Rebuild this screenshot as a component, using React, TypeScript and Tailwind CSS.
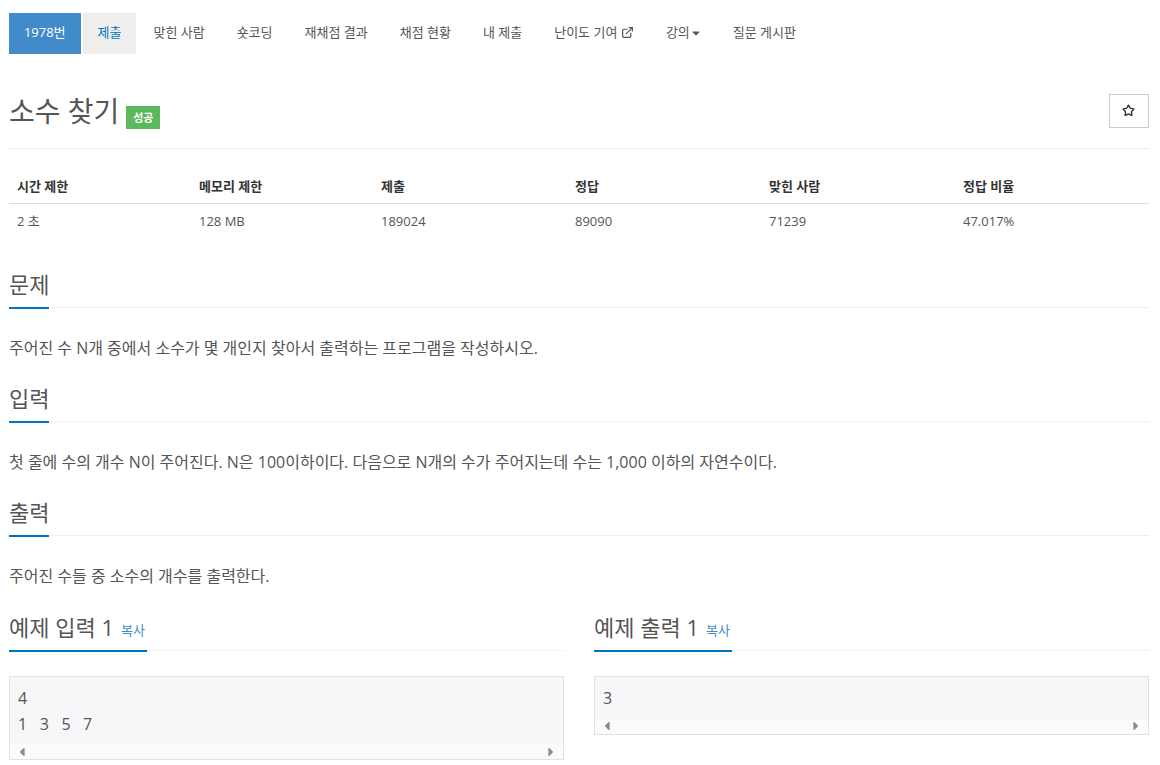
import React from 'react';
import { FaCaretDown, FaCaretLeft, FaCaretRight } from 'react-icons/fa';
import { ExternalLink, Star } from 'lucide-react';

const navItems = ['맞힌 사람', '숏코딩', '재채점 결과', '채점 현황', '내 제출'];

const stats = [
  { label: '시간 제한', value: '2 초', width: 'w-[182px]' },
  { label: '메모리 제한', value: '128 MB', width: 'w-[182px]' },
  { label: '제출', value: '189024', width: 'w-[194px]' },
  { label: '정답', value: '89090', width: 'w-[194px]' },
  { label: '맞힌 사람', value: '71239', width: 'w-[194px]' },
  { label: '정답 비율', value: '47.017%', width: 'w-[194px]' },
];

const sections = [
  { title: '문제', body: '주어진 수 N개 중에서 소수가 몇 개인지 찾아서 출력하는 프로그램을 작성하시오.' },
  { title: '입력', body: '첫 줄에 수의 개수 N이 주어진다. N은 100이하이다. 다음으로 N개의 수가 주어지는데 수는 1,000 이하의 자연수이다.' },
  { title: '출력', body: '주어진 수들 중 소수의 개수를 출력한다.' },
];

const Heading: React.FC<{ children: React.ReactNode }> = ({ children }) => (
  <div className="h-[39px] flex items-end border-b border-dotted border-[#e4e4e4]">
    <div className="h-[39px] -mb-[2px] pb-[10px] border-b-2 border-[#0076c0] flex items-center text-[22px] leading-[30px] text-[#555]">
      {children}
    </div>
  </div>
);

const Sample: React.FC<{ title: string; lines: string[] }> = ({ title, lines }) => (
  <div className="w-[555px]">
    <Heading>
      <span>{title}</span>
      <a href="#" className="ml-[7px] mt-[6px] text-[13px] text-[#428bca] pr-[2px]">복사</a>
    </Heading>
    <div className="mt-[25px] border border-[#e1e1e8] bg-[#f7f7f9]">
      <pre className="px-2 pt-[9px] pb-[7px] text-[16px] leading-[25.5px] tracking-[4.2px] text-[#555] font-['Open_Sans','Noto_Sans_CJK_KR',sans-serif]">
        {lines.join('\n')}
      </pre>
      <div className="h-[15px] bg-[#fbfbfb] flex items-center justify-between px-[5px] text-[#8a8a8a] text-sm">
        <FaCaretLeft />
        <FaCaretRight />
      </div>
    </div>
  </div>
);

export default function App() {
  return (
    <div className="min-h-screen bg-white pl-[9px] pr-[11px] pt-[13px] text-sm text-[#555] font-['Open_Sans','Noto_Sans_CJK_KR',sans-serif]">
      {/* Problem menu */}
      <ul className="flex h-[41px] gap-[2px] text-[13px] whitespace-nowrap">
        <li className="w-[71.5px] pb-[2px] flex items-center justify-center bg-[#428bca] text-white">1978번</li>
        <li className="px-[15px] pb-[2px] flex items-center bg-[#eee] text-[#0076c0]">제출</li>
        {navItems.map((item) => (
          <li key={item} className="px-[15px] pb-[2px] flex items-center">{item}</li>
        ))}
        <li className="px-[15px] pb-[2px] flex items-center gap-[3.5px]">
          난이도 기여 <ExternalLink size={13} strokeWidth={2.25} />
        </li>
        <li className="pl-[15px] pr-[14px] pb-[2px] flex items-center">
          강의<FaCaretDown className="text-xs" />
        </li>
        <li className="px-[15px] pb-[2px] flex items-center">질문 게시판</li>
      </ul>

      {/* Title */}
      <div className="h-[95px] border-b border-[#eee] flex items-start justify-between">
        <div className="flex items-center mt-[38px]">
          <h1 className="text-[28px] leading-[38px]">소수 찾기</h1>
          <span className="ml-[7px] mt-[13px] w-[34px] h-[23px] bg-[#5cb85c] text-white text-[11px] font-bold flex items-center justify-center">성공</span>
        </div>
        <button className="mt-[40px] w-[40px] h-[34px] pr-[2px] pb-[2px] border border-[#ccc] bg-white flex items-center justify-center">
          <Star size={13} strokeWidth={2.5} className="text-[#333]" />
        </button>
      </div>

      {/* Stats */}
      <table className="mt-[21px] w-full text-[13px] table-fixed">
        <thead>
          <tr className="border-b border-[#ddd] h-[33px]">
            {stats.map((s) => (
              <th key={s.label} className={`${s.width} px-2 text-left font-bold text-[#333]`}>{s.label}</th>
            ))}
          </tr>
        </thead>
        <tbody>
          <tr className="h-[37px]">
            {stats.map((s) => (
              <td key={s.label} className="px-2 text-[#555]">{s.value}</td>
            ))}
          </tr>
        </tbody>
      </table>

      {/* Sections */}
      <div className="mt-[29px]">
        {sections.map((s) => (
          <section key={s.title} className="mb-[24px]">
            <Heading><span>{s.title}</span></Heading>
            <p className="mt-[29px] text-base leading-[22px]">{s.body}</p>
          </section>
        ))}
      </div>

      {/* Samples */}
      <div className="mt-[25px] flex justify-between">
        <Sample title="예제 입력 1" lines={['4', '1 3 5 7']} />
        <Sample title="예제 출력 1" lines={['3']} />
      </div>
    </div>
  );
}
